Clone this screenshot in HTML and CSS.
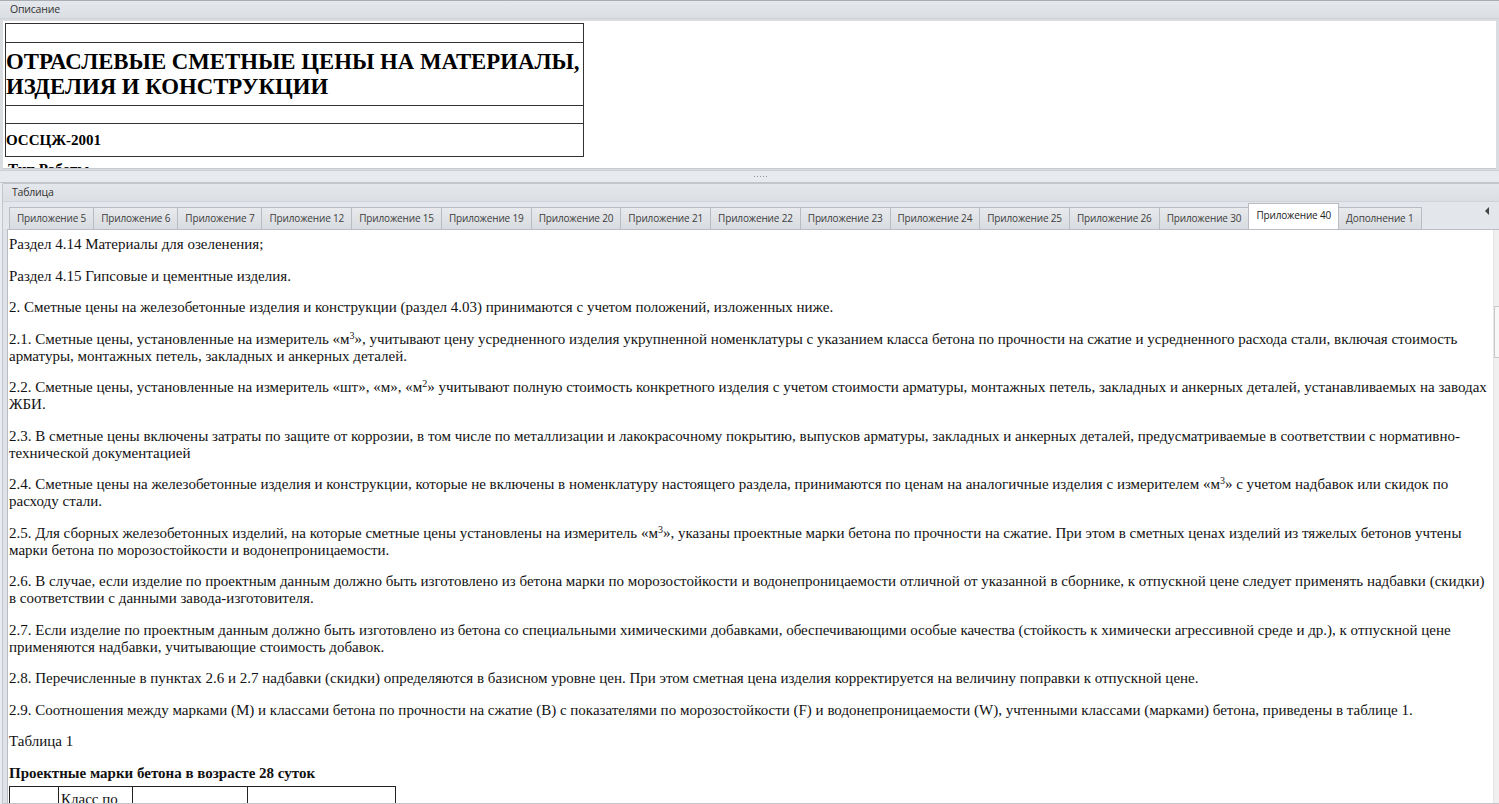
FILE: index.html
```html
<!DOCTYPE html>
<html lang="ru">
<head>
<meta charset="utf-8">
<title>ОССЦЖ-2001</title>
<link rel="stylesheet" href="styles.css">
</head>
<body>
<div class="app">
  <section class="panel panel-top">
    <div class="panel-head">Описание</div>
    <div class="desc">
      <table class="title-table">
        <tr class="r-empty1"><td></td></tr>
        <tr class="r-title"><td>ОТРАСЛЕВЫЕ СМЕТНЫЕ ЦЕНЫ НА МАТЕРИАЛЫ, ИЗДЕЛИЯ И КОНСТРУКЦИИ</td></tr>
        <tr class="r-empty2"><td></td></tr>
        <tr class="r-code"><td>ОССЦЖ-2001</td></tr>
      </table>
      <p class="desc-more">Тип Работы</p>
    </div>
  </section>
  <div class="splitter"><span class="grip"></span></div>
  <section class="panel panel-bottom">
    <div class="panel-head">Таблица</div>
    <div class="tabs">
      <span class="tab">Приложение 5</span>
      <span class="tab">Приложение 6</span>
      <span class="tab">Приложение 7</span>
      <span class="tab">Приложение 12</span>
      <span class="tab">Приложение 15</span>
      <span class="tab">Приложение 19</span>
      <span class="tab">Приложение 20</span>
      <span class="tab">Приложение 21</span>
      <span class="tab">Приложение 22</span>
      <span class="tab">Приложение 23</span>
      <span class="tab">Приложение 24</span>
      <span class="tab">Приложение 25</span>
      <span class="tab">Приложение 26</span>
      <span class="tab">Приложение 30</span>
      <span class="tab active">Приложение 40</span>
      <span class="tab">Дополнение 1</span>
      <span class="tab-arrow"></span>
    </div>
    <div class="tab-body">
      <div class="doc">
        <p>Раздел 4.14 Материалы для озеленения;</p>
        <p>Раздел 4.15 Гипсовые и цементные изделия.</p>
        <p>2. Сметные цены на железобетонные изделия и конструкции (раздел 4.03) принимаются с учетом положений, изложенных ниже.</p>
        <p>2.1. Сметные цены, установленные на измеритель «м<sup>3</sup>», учитывают цену усредненного изделия укрупненной номенклатуры с указанием класса бетона по прочности на сжатие и усредненного расхода стали, включая стоимость арматуры, монтажных петель, закладных и анкерных деталей.</p>
        <p>2.2. Сметные цены, установленные на измеритель «шт», «м», «м<sup>2</sup>» учитывают полную стоимость конкретного изделия с учетом стоимости арматуры, монтажных петель, закладных и анкерных деталей, устанавливаемых на заводах ЖБИ.</p>
        <p>2.3. В сметные цены включены затраты по защите от коррозии, в том числе по металлизации и лакокрасочному покрытию, выпусков арматуры, закладных и анкерных деталей, предусматриваемые в соответствии с нормативно-технической документацией</p>
        <p>2.4. Сметные цены на железобетонные изделия и конструкции, которые не включены в номенклатуру настоящего раздела, принимаются по ценам на аналогичные изделия с измерителем «м<sup>3</sup>» с учетом надбавок или скидок по расходу стали.</p>
        <p>2.5. Для сборных железобетонных изделий, на которые сметные цены установлены на измеритель «м<sup>3</sup>», указаны проектные марки бетона по прочности на сжатие. При этом в сметных ценах изделий из тяжелых бетонов учтены марки бетона по морозостойкости и водонепроницаемости.</p>
        <p>2.6. В случае, если изделие по проектным данным должно быть изготовлено из бетона марки по морозостойкости и водонепроницаемости отличной от указанной в сборнике, к отпускной цене следует применять надбавки (скидки) в соответствии с данными завода-изготовителя.</p>
        <p>2.7. Если изделие по проектным данным должно быть изготовлено из бетона со специальными химическими добавками, обеспечивающими особые качества (стойкость к химически агрессивной среде и др.), к отпускной цене применяются надбавки, учитывающие стоимость добавок.</p>
        <p>2.8. Перечисленные в пунктах 2.6 и 2.7 надбавки (скидки) определяются в базисном уровне цен. При этом сметная цена изделия корректируется на величину поправки к отпускной цене.</p>
        <p>2.9. Соотношения между марками (М) и классами бетона по прочности на сжатие (В) с показателями по морозостойкости (F) и водонепроницаемости (W), учтенными классами (марками) бетона, приведены в таблице 1.</p>
        <p>Таблица 1</p>
        <p class="bold">Проектные марки бетона в возрасте 28 суток</p>
        <table class="grid">
          <tr>
            <td class="c1"></td>
            <td class="c2">Класс по прочности</td>
            <td class="c3"></td>
            <td class="c4"></td>
          </tr>
        </table>
      </div>
      <div class="vscroll"><div class="thumb"></div></div>
    </div>
  </section>
</div>
</body>
</html>
```
FILE: styles.css
```css
html, body {
  margin: 0;
  padding: 0;
  height: 804px;
  overflow: hidden;
  background: #e9ecf0;
  font-family: "Segoe UI", "Open Sans", "Noto Sans", sans-serif;
}

.app {
  display: flex;
  flex-direction: column;
  height: 804px;
}

/* ---------- panels ---------- */
.panel-head {
  font-size: 10.5px;
  color: #333;
  letter-spacing: -0.2px;
  background: linear-gradient(#e4e7eb, #dbdee2);
}

.panel-top {
  display: flex;
  flex-direction: column;
  height: 169px;
  border-top: 1px solid #a9adb2;
  background: #d9dde2;
}

.panel-top .panel-head {
  height: 17px;
  line-height: 17px;
  padding-left: 10px;
  border-bottom: 1px solid #cfd3d8;
}

.desc {
  flex: 1;
  margin: 2px 3px 1px 3px;
  background: #fff;
  overflow: hidden;
  border-bottom: 1px solid #c8ccd1;
}

.title-table {
  border-collapse: collapse;
  width: 579px;
  margin: 2px 0 0 2px;
  font-family: "Liberation Serif", "Times New Roman", serif;
  font-weight: bold;
  color: #000;
}

.title-table td {
  border: 1px solid #333;
  padding: 0;
  vertical-align: middle;
}

.r-empty1 td { height: 18px; }
.r-title td {
  height: 62px;
  font-size: 22.8px;
  line-height: 25px;
}
.r-empty2 td { height: 17px; }
.r-code td {
  height: 32px;
  font-size: 15px;
}

.desc-more {
  margin: 4px 0 0 5px;
  font-family: "Liberation Serif", serif;
  font-size: 15px;
  font-weight: bold;
}

/* ---------- splitter ---------- */
.splitter {
  height: 11px;
  border-top: 1px solid #cdd1d6;
  border-bottom: 1px solid #c2c6cb;
  background: #e8ebee;
  display: flex;
  align-items: center;
  justify-content: center;
}

.grip {
  width: 14px;
  height: 1px;
  background: repeating-linear-gradient(90deg, #8f949a 0 1px, transparent 1px 3px);
  margin-left: 22px;
}

/* ---------- bottom panel ---------- */
.panel-bottom {
  flex: 1;
  display: flex;
  flex-direction: column;
  margin-left: 2px;
  border: 1px solid #c3c7cc;
  border-right: none;
  border-top-left-radius: 2px;
  background: #dfe2e6;
  min-height: 0;
}

.panel-bottom .panel-head {
  height: 17px;
  line-height: 17px;
  padding-left: 9px;
  border-bottom: 1px solid #d0d4d9;
}

.tabs {
  height: 27px;
  display: flex;
  align-items: flex-end;
  padding-left: 6px;
  background: #e3e6ea;
  position: relative;
}

.tab {
  height: 21px;
  line-height: 20px;
  padding: 0 7px;
  font-size: 10px;
  letter-spacing: -0.16px;
  color: #3d3d3d;
  border: 1px solid #b9bdc3;
  border-bottom: none;
  margin-left: -1px;
  background: linear-gradient(#e8eaed, #d8dbdf);
  white-space: nowrap;
}

.tab:first-child { margin-left: 0; }

.tab.active {
  height: 25px;
  line-height: 23px;
  background: #fff;
  color: #222;
  position: relative;
  z-index: 1;
}

.tab-arrow {
  position: absolute;
  right: 10px;
  top: 5px;
  width: 0;
  height: 0;
  border-top: 4px solid transparent;
  border-bottom: 4px solid transparent;
  border-right: 4px solid #444;
}

.tab-body {
  flex: 1;
  display: flex;
  min-height: 0;
  margin-left: 4px;
  border: 1px solid #b9bdc3;
  border-right: none;
  border-bottom: none;
  background: #fff;
  overflow: hidden;
}

.doc {
  flex: 1;
  padding: 6px 6px 0 1px;
  font-family: "Liberation Serif", "Times New Roman", serif;
  font-size: 15px;
  line-height: 17px;
  color: #111;
  overflow: hidden;
}

.doc p {
  margin: 0 0 14.5px 0;
}

.doc sup {
  font-size: 10px;
  line-height: 0;
  vertical-align: 5px;
}

.doc .bold {
  font-weight: bold;
  margin-bottom: 4px;
}

.grid {
  border-collapse: collapse;
}

.grid td {
  border: 1px solid #222;
  vertical-align: top;
  padding: 0 2px;
  height: 40px;
}

.grid .c1 { width: 44px; }
.grid .c2 { width: 69px; padding-top: 4px; }
.grid .c3 { width: 110px; }
.grid .c4 { width: 143px; }

/* ---------- scrollbar ---------- */
.vscroll {
  width: 5px;
  background: #f0f0f0;
  border-left: 1px solid #e6e6e6;
  padding-top: 76px;
}

.thumb {
  height: 50px;
  border: 1px solid #c9c9c9;
  border-right: none;
  background: #f7f7f7;
}
```
